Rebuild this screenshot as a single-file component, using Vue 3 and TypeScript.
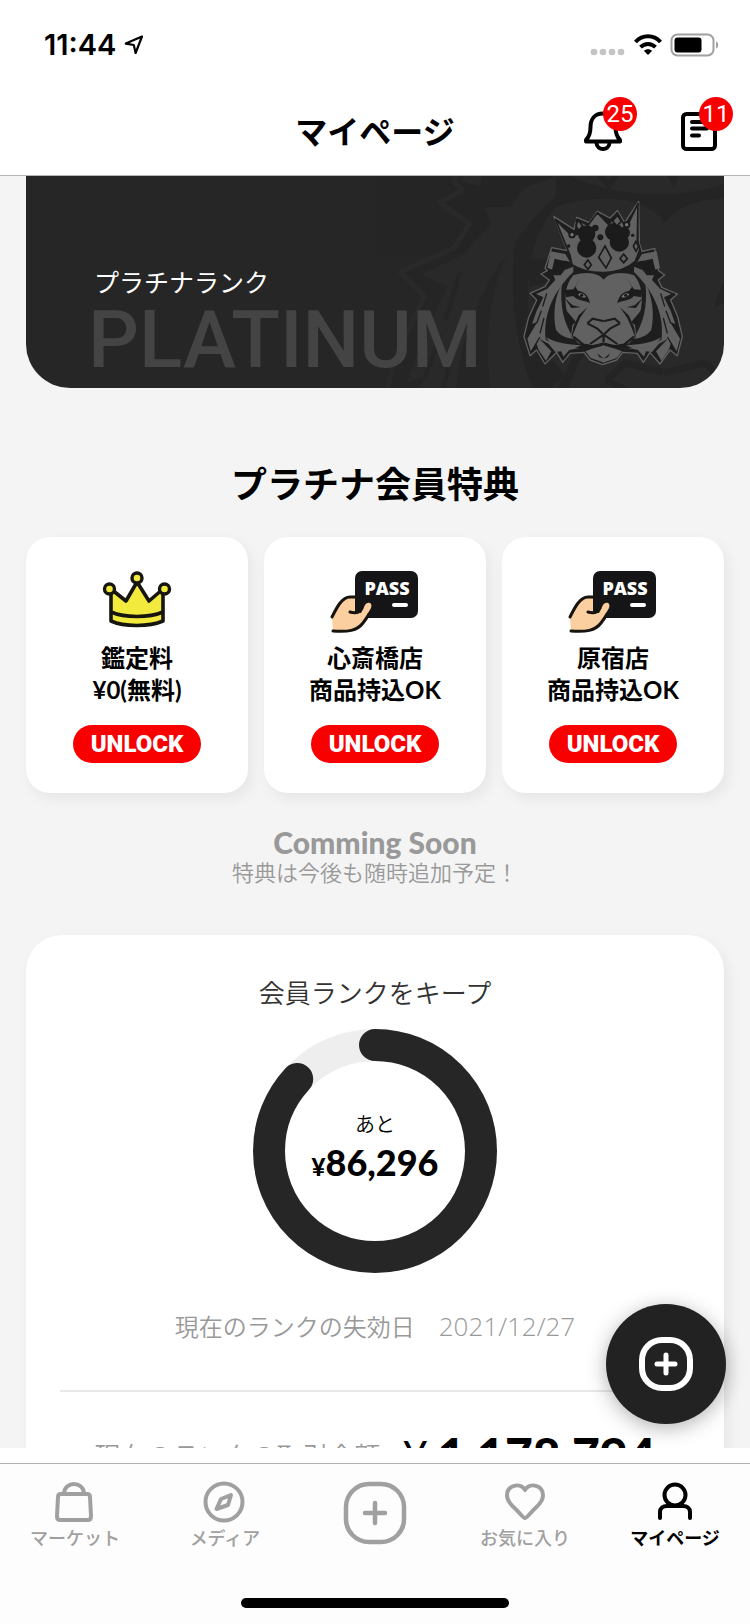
<script setup lang="ts">
interface Perk {
  icon: 'crown' | 'pass'
  lines: string[]
}

interface Tab {
  id: string
  label: string
}

const perks: Perk[] = [
  { icon: 'crown', lines: ['鑑定料', '¥0(無料)'] },
  { icon: 'pass', lines: ['心斎橋店', '商品持込OK'] },
  { icon: 'pass', lines: ['原宿店', '商品持込OK'] },
]

const tabs: Tab[] = [
  { id: 'market', label: 'マーケット' },
  { id: 'media', label: 'メディア' },
  { id: 'add', label: '' },
  { id: 'favorite', label: 'お気に入り' },
  { id: 'mypage', label: 'マイページ' },
]

const activeTab = 'mypage'
const progress = 0.868
const circumference = 2 * Math.PI * 106
const dash = `${circumference * progress} ${circumference}`
</script>

<template>
  <div class="screen">
    <svg class="defs" width="0" height="0" aria-hidden="true">
      <defs>
        <g id="tiger-half">
          <!-- ear -->
          <path d="M122 184 L166 192 L180 216 C154 206 136 216 130 240 L112 234 Z" fill="#616161" />
          <path d="M126 240 L134 206 L176 216 L150 244 Z" fill="#1c1c1c" />
          <!-- mane -->
          <path d="M190 230 L164 240 L152 256 L130 256 L136 270 L112 296 L78 312 L100 322 L80 362 L66 402 L82 396 L52 446 L62 484 L88 440 L108 452 C98 384 124 310 190 246 Z" fill="#616161" />
          <path d="M156 280 C134 322 128 372 138 420 C152 438 172 446 192 446 C162 404 148 346 156 280 Z" fill="#616161" />
          <path d="M88 446 L116 462 L136 486 L154 484 L160 500 L178 480 L208 474 L150 470 L104 448 L92 440 L80 462 L86 480 L108 512 L124 484 Z" fill="#616161" />
          <path d="M108 442 C140 460 176 464 214 466 C176 486 130 478 108 442 Z" fill="#616161" />
          <path d="M110 310 L98 350 M94 362 L80 400 M102 384 L90 430" fill="none" stroke="#1c1c1c" stroke-width="4" />
          <!-- face -->
          <path d="M283 272 C270 250 232 242 190 256 C168 280 160 322 172 372 L188 396 L184 432 L204 460 L244 466 L283 458 Z" fill="#616161" />
          <path d="M214 262 L196 290 L204 302 C222 304 236 316 240 340 C226 330 204 334 190 318 L168 322 L166 300 L190 298 Z" fill="#1c1c1c" />
          <path d="M204 313 C212 306 222 310 228 321 C218 325 209 321 204 313 Z" fill="#777" />
          <circle cx="215" cy="316" r="5" fill="#1c1c1c" />
          <path d="M164 324 L188 346 L212 352 L184 354 Z M166 358 L198 396 L186 406 Z M232 352 L206 376 L190 410 L184 446 L196 416 L210 384 Z" fill="#1c1c1c" />
          <path d="M190 440 L220 464 L252 470 L282 460" fill="none" stroke="#1c1c1c" stroke-width="7" />
          <path d="M232 400 L248 386 L282 394 M232 400 L262 416 L281 434 L281 456 M281 434 L240 462" fill="none" stroke="#1c1c1c" stroke-width="6" />
          <path d="M283 466 L246 476 L226 484 L242 504 L283 518 Z" fill="#616161" />
          <path d="M281 506 L262 490 L268 502 Z" fill="#1c1c1c" />
        </g>
        <g id="tiger">
          <path
            d="M132 80 L172 182 L125 173 L105 235 L112 242 L93 252 L118 270 L105 290 L60 310 L80 330 L55 385 L42 440 L60 497 L80 480 L105 522 L140 487 L158 517 L180 490 L222 487 L240 510 L278 524 L320 510 L338 487 L382 490 L400 517 L420 487 L450 522 L480 480 L502 497 L517 440 L503 380 L482 330 L502 312 L455 292 L445 270 L464 255 L446 242 L434 175 L396 184 L388 160 L386 34 L344 98 L322 62 L300 84 L262 64 L238 98 L200 82 L192 118 Z"
            fill="#1e1e1e" stroke="#616161" stroke-width="4" stroke-linejoin="round"
          />
          <use href="#tiger-half" />
          <use href="#tiger-half" transform="translate(562 0) scale(-1 1)" />
          <!-- crown -->
          <path
            d="M136 88 L186 138 L204 132 L198 88 L234 106 L262 68 L296 104 L322 68 L340 100 L354 104 L384 40 L382 150 L390 178 L376 214 C330 256 240 258 186 224 L180 196 Z"
            fill="#616161" stroke="#1e1e1e" stroke-width="5" stroke-linejoin="round"
          />
          <g fill="#1b1b1b">
            <circle cx="230" cy="174" r="29" />
            <circle cx="230" cy="132" r="26" />
            <circle cx="256" cy="114" r="10" />
            <circle cx="328" cy="156" r="29" />
            <circle cx="312" cy="126" r="27" />
            <circle cx="342" cy="128" r="18" />
            <circle cx="271" cy="142" r="9" />
            <circle cx="186" cy="134" r="11" />
            <circle cx="350" cy="104" r="11" />
            <circle cx="176" cy="168" r="5" />
            <circle cx="368" cy="136" r="5" />
          </g>
          <g fill="#616161" stroke="#1b1b1b" stroke-width="5">
            <path d="M285 168 L304 204 L288 234 L266 202 Z" />
            <path d="M234 210 L244 224 L234 238 L223 224 Z" />
            <path d="M341 192 L352 206 L341 218 L330 206 Z" />
            <path d="M378 154 L386 170 L378 184 L370 168 Z" />
            <path d="M204 90 L218 108 L206 122 L198 108 Z" />
            <path d="M322 76 L334 94 L320 108 L308 92 Z" />
          </g>
          <circle cx="186" cy="134" r="5" fill="#777" />
          <circle cx="350" cy="104" r="5" fill="#777" />
        </g>
      </defs>
    </svg>

    <div class="status">
      <div class="status-left">
        <span class="clock">11:44</span>
        <svg width="20" height="20" viewBox="0 0 20 20" aria-hidden="true">
          <path d="M18 1.5 L1.8 8.6 L9.8 10 L11.6 18 Z" fill="none" stroke="#000" stroke-width="2.2" stroke-linejoin="round" />
        </svg>
      </div>
      <div class="status-right">
        <svg width="36" height="22" viewBox="0 0 36 22" aria-hidden="true">
          <g fill="#c4c4c4">
            <circle cx="4" cy="18" r="3.3" /><circle cx="13" cy="18" r="3.3" />
            <circle cx="22" cy="18" r="3.3" /><circle cx="31" cy="18" r="3.3" />
          </g>
        </svg>
        <svg width="28" height="22" viewBox="0 0 28 22" aria-hidden="true">
          <path d="M1.5 8 C8.5 0.4 19.5 0.4 26.5 8" fill="none" stroke="#000" stroke-width="4" />
          <path d="M6.5 13.2 C10.7 8.9 17.3 8.9 21.5 13.2" fill="none" stroke="#000" stroke-width="3.8" />
          <path d="M14 21 L9.8 16.8 C12.2 14.7 15.8 14.7 18.2 16.8 Z" />
        </svg>
        <svg width="50" height="24" viewBox="0 0 50 24" aria-hidden="true">
          <rect x="1.5" y="1.5" width="42" height="21" rx="6" fill="none" stroke="#a0a0a0" stroke-width="2" />
          <rect x="4.5" y="4.5" width="27" height="15" rx="3" />
          <path d="M46 8.5 C49 9.5 49 14.5 46 15.5 Z" fill="#a0a0a0" />
        </svg>
      </div>
    </div>

    <header class="nav">
      <h1>マイページ</h1>
      <div class="nav-actions">
        <button type="button" aria-label="通知">
          <svg width="40" height="42" viewBox="0 0 40 42" aria-hidden="true">
            <path d="M20 3.5 C12 3.5 7.5 9 7.5 17 C7.5 24 6 27 3 30 L3 31.5 H37 V30 C34 27 32.5 24 32.5 17 C32.5 9 28 3.5 20 3.5 Z" fill="none" stroke="#000" stroke-width="4" stroke-linejoin="round" />
            <path d="M13.5 33 C14 41 26 41 26.5 33" fill="none" stroke="#000" stroke-width="4" />
          </svg>
          <span class="badge">25</span>
        </button>
        <button type="button" aria-label="お知らせ">
          <svg width="40" height="42" viewBox="0 0 40 42" aria-hidden="true">
            <rect x="4" y="4" width="32" height="35" rx="3.5" fill="none" stroke="#000" stroke-width="4" />
            <path d="M13 12 H28 M13 18.5 H28 M13 25.5 H20" stroke="#000" stroke-width="4" stroke-linecap="round" />
          </svg>
          <span class="badge">11</span>
        </button>
      </div>
    </header>

    <main class="content">
      <section class="rank">
        <svg class="ghost" width="684" height="684" viewBox="0 0 570 570" aria-hidden="true"><use href="#tiger" /></svg>
        <div class="rank-name">
          <p class="rank-ja">プラチナランク</p>
          <p class="rank-en">PLATINUM</p>
        </div>
        <svg class="mark" width="190" height="190" viewBox="0 0 570 570" aria-hidden="true"><use href="#tiger" /></svg>
      </section>

      <h2>プラチナ会員特典</h2>
      <ul class="perks">
        <li v-for="perk in perks" :key="perk.lines[0]" class="perk">
          <svg v-if="perk.icon === 'crown'" width="92" height="64" viewBox="0 0 92 64" aria-hidden="true">
            <path d="M20 20 L35 32 L46 13 L58 32 L72 20 V52 C58 58 33 58 20 52 Z" fill="#f2ea3c" stroke="#17150f" stroke-width="3.6" stroke-linejoin="round" />
            <path d="M20 43 C34 49 58 49 72 43" fill="none" stroke="#17150f" stroke-width="3.6" />
            <g fill="#f2ea3c" stroke="#17150f" stroke-width="3.4">
              <circle cx="46" cy="9" r="5" /><circle cx="18.5" cy="20" r="5" /><circle cx="73.5" cy="20" r="5" />
            </g>
          </svg>
          <svg v-else width="92" height="64" viewBox="0 0 92 64" aria-hidden="true">
            <path d="M3 48 C8 36 14 27 21 27 H32 V42 L40 33 C43 30 47 33 45 37 L36 53 C29 62 17 62 4 62 Z" fill="#fbcfa0" />
            <path d="M3 48 C8 38 13 28 21 28 H30" fill="none" stroke="#17130f" stroke-width="3" stroke-linecap="round" />
            <rect x="26" y="2" width="63" height="47" rx="7" fill="#151517" />
            <path d="M24 43 L32 44 L36 36 C39 32 44 34 42 39 L34 53 L24 56 Z" fill="#fbcfa0" />
            <path d="M21 43 C28 45 31 43 33 39 M4 62 C19 63 28 62 34 54 C37 50 39 47 40 45" fill="none" stroke="#17130f" stroke-width="3" stroke-linecap="round" />
            <text class="pass-text" x="58" y="26" text-anchor="middle">PASS</text>
            <path d="M65 36 H77" stroke="#fff" stroke-width="4" stroke-linecap="round" />
          </svg>
          <p class="perk-text"><span v-for="line in perk.lines" :key="line">{{ line }}</span></p>
          <button type="button" class="unlock">UNLOCK</button>
        </li>
      </ul>

      <div class="soon">
        <p class="soon-en">Comming Soon</p>
        <p class="soon-ja">特典は今後も随時追加予定！</p>
      </div>

      <section class="keep">
        <h3>会員ランクをキープ</h3>
        <div class="ring">
          <svg width="244" height="244" viewBox="0 0 244 244" aria-hidden="true">
            <circle cx="122" cy="122" r="106" fill="none" stroke="#eee" stroke-width="32" />
            <circle cx="122" cy="122" r="106" fill="none" stroke="#262626" stroke-width="32" stroke-linecap="round" :stroke-dasharray="dash" transform="rotate(-90 122 122)" />
          </svg>
          <div class="ring-text">
            <span>あと</span>
            <strong><small>¥</small>86,296</strong>
          </div>
        </div>
        <p class="expiry">現在のランクの失効日　<time datetime="2021-12-27">2021/12/27</time></p>
        <hr />
        <p class="total"><span>現在のランクの取引金額</span><strong><small>¥</small>1,178,794</strong></p>
      </section>

      <button type="button" class="fab" aria-label="追加">
        <svg width="56" height="56" viewBox="0 0 56 56" aria-hidden="true">
          <rect x="4" y="4" width="48" height="48" rx="20" fill="none" stroke="#fff" stroke-width="6" />
          <path d="M28 19 V37 M19 28 H37" stroke="#fff" stroke-width="5" stroke-linecap="round" />
        </svg>
      </button>
    </main>

    <nav class="tabs">
      <a v-for="tab in tabs" :key="tab.id" href="#" class="tab" :class="{ active: tab.id === activeTab }" :aria-label="tab.label || '出品'">
        <svg v-if="tab.id === 'add'" width="64" height="66" viewBox="0 0 64 66" aria-hidden="true">
          <rect x="3" y="4" width="58" height="58" rx="23" fill="none" stroke="currentColor" stroke-width="4.5" />
          <path d="M32 23 V43 M22 33 H42" stroke="currentColor" stroke-width="4.5" stroke-linecap="round" />
        </svg>
        <svg v-else width="44" height="44" viewBox="0 0 44 44" fill="none" stroke="currentColor" stroke-width="4" stroke-linejoin="round" stroke-linecap="round" aria-hidden="true">
          <template v-if="tab.id === 'market'">
            <path d="M8 14 H34 C36 14 37 15 37 17 L38 36 C38 38.500 37 40 35 40 H7 C5 40 4 38.500 4 36 L5 17 C5 15 6 14 8 14 Z" />
            <path d="M11 13 C12 1 30 1 31 13" />
          </template>
          <template v-else-if="tab.id === 'media'">
            <circle cx="21" cy="22" r="18.500" />
            <path d="M28 15 L18 19 L13.500 29 L25 25 Z" />
          </template>
          <path v-else-if="tab.id === 'favorite'" d="M22 38 C20 38 17 33 12 28.5 C7 24 4 20.5 4 15.5 C4 5 17 2 22 10 C27 2 40 5 40 15.5 C40 20.5 37 24 32 28.5 C27 33 24 38 22 38 Z" />
          <template v-else>
            <circle cx="22" cy="15" r="10.5" />
            <path d="M7 38 V32 C7 28 10 26 14 26 H30 C34 26 37 28 37 32 V38" />
          </template>
        </svg>
        <span v-if="tab.label">{{ tab.label }}</span>
      </a>
    </nav>
    <div class="home"><span></span></div>
  </div>
</template>

<style>
body {
  margin: 0;
  background: #f4f4f4;
}
</style>

<style scoped>
.screen {
  position: relative;
  display: flex;
  flex-direction: column;
  height: 100vh;
  overflow: hidden;
  background: #f4f4f4;
  color: #000;
  font-family: "Lato", "Noto Sans CJK JP", sans-serif;
}
.defs {
  position: absolute;
}
h1, h2, h3, p, ul {
  margin: 0;
  padding: 0;
}
button {
  border: 0;
  padding: 0;
  font-family: inherit;
  cursor: pointer;
}
svg {
  display: block;
  flex: none;
}
.status {
  display: flex;
  justify-content: space-between;
  align-items: center;
  height: 90px;
  padding: 0 30px 0 44px;
  box-sizing: border-box;
  background: #fff;
}
.status-left, .status-right {
  display: flex;
  align-items: center;
  gap: 8px;
}
.clock {
  font: 600 29px/32px "Inter", sans-serif;
}
.nav {
  position: relative;
  display: flex;
  align-items: center;
  justify-content: center;
  height: 84px;
  padding-bottom: 1px;
  background: #fff;
  border-bottom: 1px solid #b5b5b5;
}
h1 {
  font-size: 32px;
  line-height: 40px;
  font-weight: 700;
}
.nav-actions {
  position: absolute;
  right: 31px;
  top: 20px;
  display: flex;
  gap: 56px;
}
.nav-actions button {
  position: relative;
  background: none;
}
.badge {
  position: absolute;
  top: -13px;
  right: -14px;
  width: 34px;
  height: 34px;
  border-radius: 50%;
  background: #f80000;
  color: #fff;
  font: 400 24px/34px "Roboto", sans-serif;
  text-align: center;
}
.content {
  position: relative;
  flex: 1;
  min-height: 0;
  overflow: hidden;
  padding: 0 26px;
}
.rank {
  position: relative;
  display: flex;
  justify-content: space-between;
  align-items: flex-end;
  padding: 14px 24px 8px 62px;
  overflow: hidden;
  border-radius: 0 0 44px 44px;
  background: #262626;
}
.ghost {
  position: absolute;
  top: -276px;
  right: -288px;
  opacity: 0.06;
}
.rank-name, .mark {
  position: relative;
}
.rank-ja {
  padding-left: 6px;
  color: #fff;
  font-size: 25px;
  line-height: 28px;
}
.rank-en {
  margin-top: 4px;
  color: #444;
  font: 500 80px/80px "Roboto", sans-serif;
}
h2 {
  margin: 72px 0 29px;
  font-size: 36px;
  line-height: 48px;
  font-weight: 700;
  text-align: center;
}
.perks {
  display: grid;
  grid-template-columns: repeat(3, 1fr);
  gap: 16px;
  list-style: none;
}
.perk {
  display: flex;
  flex-direction: column;
  align-items: center;
  padding: 32px 0 30px;
  border-radius: 24px;
  background: #fff;
  box-shadow: 4px 6px 14px rgba(0, 0, 0, 0.06);
}
.pass-text {
  fill: #fff;
  font: 800 18px "Open Sans", sans-serif;
}
.perk-text {
  margin: 9px 0 19px;
  font-size: 24px;
  line-height: 32px;
  font-weight: 700;
  text-align: center;
}
.perk-text span {
  display: block;
}
.unlock {
  width: 128px;
  height: 38px;
  border-radius: 19px;
  background: #f80000;
  color: #fff;
  font: 900 24px/38px "Roboto", sans-serif;
}
.soon {
  margin: 31px 0 49px;
  color: #999;
  text-align: center;
}
.soon-en {
  font-size: 30px;
  line-height: 36px;
  font-weight: 900;
}
.soon-ja {
  font-size: 22px;
  line-height: 26px;
  font-weight: 350;
}
.keep {
  display: flex;
  flex-direction: column;
  align-items: center;
  padding: 40px 34px;
  border-radius: 36px;
  background: #fff;
  box-shadow: 4px 6px 14px rgba(0, 0, 0, 0.06);
}
h3 {
  margin-bottom: 18px;
  color: #333;
  font-size: 26px;
  line-height: 36px;
  font-weight: 350;
}
.ring {
  display: grid;
  place-items: center;
}
.ring > * {
  grid-area: 1 / 1;
}
.ring-text {
  display: flex;
  flex-direction: column;
  align-items: center;
  padding-bottom: 6px;
  font-size: 20px;
  line-height: 32px;
  font-weight: 350;
}
.ring-text strong {
  font-size: 36px;
  line-height: 44px;
  font-weight: 900;
}
.ring-text small {
  font-size: 24px;
}
.expiry {
  margin: 35px 0 45px;
  color: #999;
  font-family: "Open Sans", "Noto Sans CJK JP", sans-serif;
  font-size: 24px;
  line-height: 36px;
  font-weight: 350;
}
.expiry time {
  font-size: 26px;
}
hr {
  width: 100%;
  height: 2px;
  margin: 0 0 33px;
  border: 0;
  background: #e8e8e8;
}
.total {
  display: flex;
  align-items: center;
  gap: 22px;
  color: #999;
  font-size: 26px;
  line-height: 60px;
  font-weight: 350;
  white-space: nowrap;
}
.total strong {
  color: #000;
  font-size: 48px;
  font-weight: 900;
}
.total small {
  margin-right: 10px;
  font-size: 44px;
  font-weight: 400;
}
.fab {
  position: absolute;
  right: 24px;
  bottom: 24px;
  display: grid;
  place-items: center;
  width: 120px;
  height: 120px;
  border-radius: 50%;
  background: #222;
  box-shadow: 0 4px 20px rgba(0, 0, 0, 0.3);
}
.tabs {
  display: grid;
  grid-template-columns: repeat(5, 1fr);
  height: 100px;
  padding-top: 16px;
  background: #fdfdfd;
  box-shadow: 0 -15px #fff;
  border-top: 1px solid #b0b0b0;
  margin-top: 15px;
}
.tab {
  display: flex;
  flex-direction: column;
  align-items: center;
  color: #a0a0a0;
  font-size: 18px;
  line-height: 28px;
  text-decoration: none;
}
.tab span {
  font-weight: 500;
}
.tab.active {
  color: #000;
}
.tab.active span {
  font-weight: 700;
}
.home {
  display: flex;
  justify-content: center;
  padding: 18px 0 16px;
  background: #fdfdfd;
}
.home span {
  width: 268px;
  height: 10px;
  border-radius: 5px;
  background: #000;
}
</style>
